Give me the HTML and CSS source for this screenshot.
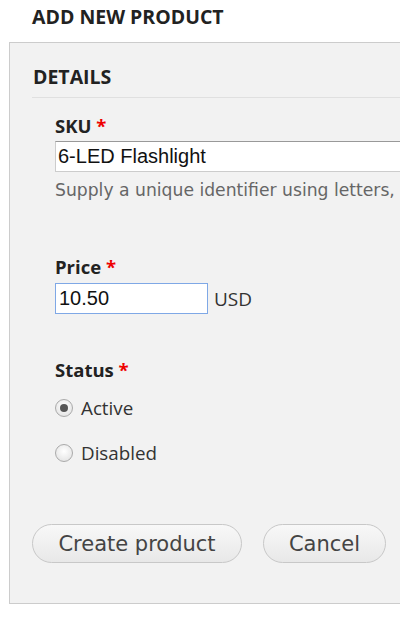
FILE: index.html
```html
<!DOCTYPE html>
<html>
<head>
<meta charset="utf-8">
<link rel="stylesheet" href="styles.css">
</head>
<body>
<h1 class="page-title">ADD NEW PRODUCT</h1>
<form class="panel">
  <div class="fieldset">
    <div class="legend">DETAILS</div>
    <div class="fields">
      <div class="field sku">
        <label class="label">SKU <span class="req">*</span></label>
        <div class="input wide">6-LED Flashlight</div>
        <div class="desc">Supply a unique identifier using letters,</div>
      </div>
      <div class="field price">
        <label class="label">Price <span class="req">*</span></label>
        <div class="price-row">
          <div class="input short focus">10.50</div>
          <span class="unit">USD</span>
        </div>
      </div>
      <div class="field status">
        <label class="label">Status <span class="req">*</span></label>
        <div class="radio-row"><span class="radio checked"></span><span class="radio-label">Active</span></div>
        <div class="radio-row"><span class="radio"></span><span class="radio-label">Disabled</span></div>
      </div>
    </div>
  </div>
  <div class="actions">
    <button type="button" class="btn create">Create product</button>
    <button type="button" class="btn cancel">Cancel</button>
  </div>
</form>
</body>
</html>
```
FILE: styles.css
```css
html, body {
  margin: 0;
  padding: 0;
  background: #fff;
  overflow: hidden;
}
body {
  width: 400px;
  height: 617px;
  font-family: "Open Sans", "Lato", sans-serif;
  color: #333;
}
.page-title {
  margin: 0;
  height: 42px;
  box-sizing: border-box;
  padding: 5px 0 0 32px;
  font-size: 19.5px;
  line-height: 24px;
  font-weight: bold;
  color: #222;
}
.panel {
  margin: 0 0 0 9px;
  width: 500px;
  height: 562px;
  box-sizing: border-box;
  border: 1px solid #ccc;
  background: #f2f2f2;
  display: flex;
  flex-direction: column;
}
.fieldset {
  padding: 0 0 0 22px;
}
.legend {
  margin-top: 22px;
  padding: 0 0 8px 1px;
  border-bottom: 1px solid #e0e0e0;
  font-size: 19.5px;
  line-height: 24px;
  font-weight: bold;
  color: #222;
}
.fields {
  padding-left: 23px;
}
.field { display: flex; flex-direction: column; }
.label {
  font-size: 18.5px;
  line-height: 24px;
  font-weight: bold;
  color: #222;
}
.req { color: #e00; }
.sku { margin-top: 16px; }
.sku .label { margin-bottom: 3px; }
.input {
  box-sizing: border-box;
  height: 31px;
  border: 1px solid #ccc;
  border-top-color: #999;
  background: #fff;
  font-family: "Liberation Sans", Arial, sans-serif;
  font-size: 20px;
  line-height: 29px;
  padding-left: 2px;
  color: #111;
}
.wide { width: 400px; }
.short { width: 153px; }
.focus { border: 1px solid #7fa8e6; padding-left: 3px; }
.desc {
  margin-top: 6px;
  font-family: "DejaVu Sans", Verdana, sans-serif;
  font-size: 17.2px;
  line-height: 24px;
  color: #666;
  white-space: nowrap;
}
.price { margin-top: 53px; }
.price .label { margin-bottom: 4px; }
.price-row { display: flex; align-items: center; gap: 6px; }
.unit { font-size: 19px; color: #333; }
.status { margin-top: 44px; }
.status .label { margin-bottom: 15px; }
.radio-row { display: flex; align-items: center; gap: 8px; height: 22px; margin-bottom: 23px; }
.radio {
  width: 18px;
  height: 18px;
  box-sizing: border-box;
  border-radius: 50%;
  border: 1px solid #aaa;
  background: radial-gradient(circle at 50% 40%, #fff 0%, #e8e8e8 70%, #d6d6d6 100%);
  position: relative;
}
.radio.checked::after {
  content: "";
  position: absolute;
  left: 4px;
  top: 4px;
  width: 8px;
  height: 8px;
  border-radius: 50%;
  background: #555;
}
.radio-label { font-size: 18.8px; color: #333; }
.actions {
  margin-top: 37px;
  padding-left: 22px;
  display: flex;
  gap: 21px;
}
.btn {
  height: 39px;
  border: 1px solid #c8c8c8;
  border-radius: 20px;
  background: linear-gradient(#f8f8f8, #e8e8e8);
  font-family: "DejaVu Sans", Verdana, sans-serif;
  font-size: 21px;
  color: #444;
  padding: 0;
}
.create { width: 210px; }
.cancel { width: 123px; }
```
